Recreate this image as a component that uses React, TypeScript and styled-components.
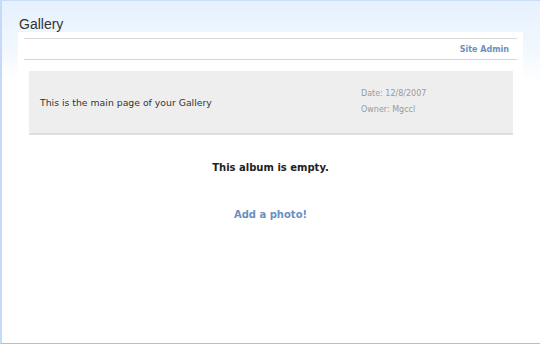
import React from "react";
import styled, { createGlobalStyle } from "styled-components";

const GlobalStyle = createGlobalStyle`
  html, body {
    margin: 0;
    padding: 0;
    background: #fff;
  }
  * {
    box-sizing: border-box;
  }
`

const Page = styled.div`
  width: 540px;
  height: 344px;
  border-top: 1px solid #c9ddf6;
  border-left: 2px solid #c4daf6;
  border-bottom: 1px solid #bdbdbd;
  background: linear-gradient(to bottom, #e6f1fd 0px, #f1f7fe 45px, #ffffff 80px);
  font-family: "DejaVu Sans", Verdana, sans-serif;
  overflow: hidden;
`

const Title = styled.h1`
  margin: 0;
  padding: 15px 0 0 17px;
  height: 31px;
  font-family: "Liberation Sans", Arial, sans-serif;
  font-weight: normal;
  font-size: 14px;
  line-height: 16px;
  color: #333;
`

const Panel = styled.div`
  margin-left: 16px;
  width: 505px;
  height: 320px;
  padding: 6px 6px 0 6px;
  background: #fff;
`

const NavBar = styled.div`
  height: 22px;
  border-top: 1px solid #dadada;
  border-bottom: 1px solid #d6d6d6;
  display: flex;
  align-items: center;
  justify-content: flex-end;
  padding-right: 8px;
`

const NavLink = styled.a`
  font-size: 8px;
  font-weight: bold;
  color: #6d8fbd;
  text-decoration: none;
  padding-top: 1px;
`

const InfoBox = styled.div`
  margin: 11px 4px 0 5px;
  height: 64px;
  background: #eeeeee;
  border-bottom: 2px solid #dfdfdf;
  display: flex;
  align-items: center;
  justify-content: space-between;
  padding: 0 0 0 11px;
`

const Description = styled.div`
  font-size: 9.3px;
  color: #333;
`

const Meta = styled.div`
  width: 152px;
  font-size: 8px;
  line-height: 16px;
  color: #9a9a9a;
`

const EmptyText = styled.div`
  margin-top: 27px;
  text-align: center;
  font-size: 10px;
  font-weight: bold;
  color: #222;
`

const AddLink = styled.a`
  display: block;
  margin-top: 36px;
  text-align: center;
  font-size: 10px;
  font-weight: bold;
  color: #6a8fc0;
  text-decoration: none;
`

const App: React.FC = () => {
  return (
    <Page>
      <GlobalStyle />
      <Title>Gallery</Title>
      <Panel>
        <NavBar>
          <NavLink href="#">Site Admin</NavLink>
        </NavBar>
        <InfoBox>
          <Description>This is the main page of your Gallery</Description>
          <Meta>
            <div>Date: 12/8/2007</div>
            <div>Owner: Mgccl</div>
          </Meta>
        </InfoBox>
        <EmptyText>This album is empty.</EmptyText>
        <AddLink href="#">Add a photo!</AddLink>
      </Panel>
    </Page>
  );
};

export default App;
